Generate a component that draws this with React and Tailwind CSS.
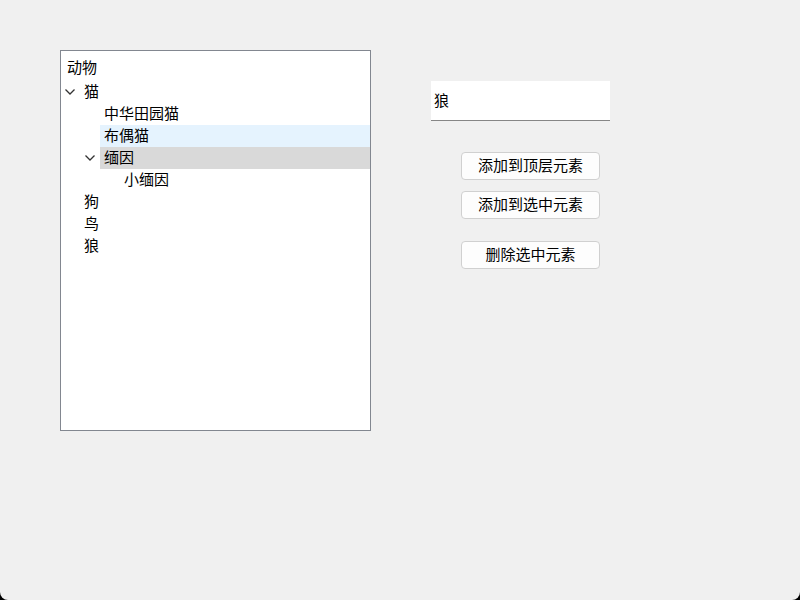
const tree = [
  { label: '猫', level: 0, open: true },
  { label: '中华田园猫', level: 1 },
  { label: '布偶猫', level: 1, hover: true },
  { label: '缅因', level: 1, open: true, selected: true },
  { label: '小缅因', level: 2 },
  { label: '狗', level: 0 },
  { label: '鸟', level: 0 },
  { label: '狼', level: 0 },
]

const indent = ['pl-[3px]', 'pl-[23px]', 'pl-[43px]']

function Chevron() {
  return (
    <svg width="10" height="6" viewBox="0 0 10 6" className="ml-[1px]">
      <path d="M0.5 0.5 L5 5 L9.5 0.5" fill="none" stroke="#333" strokeWidth="1.3" />
    </svg>
  )
}

function TreeRow({ item }) {
  const bg = item.selected ? 'bg-[#d9d9d9]' : item.hover ? 'bg-[#e5f3fe]' : ''
  return (
    <div className={`flex h-[22px] items-center ${indent[item.level]}`}>
      <div className="flex w-[16px] items-center">{item.open && <Chevron />}</div>
      <div className={`flex h-full flex-1 items-center pb-[2px] pl-[4px] ${bg}`}>{item.label}</div>
    </div>
  )
}

export default function App() {
  return (
    <div className="h-[600px] w-[800px] bg-black">
      <div
        className="flex h-full w-full rounded-b-[8px] bg-[#f0f0f0] pl-[60px] pt-[50px] text-[15px] leading-[20px] text-black"
        style={{ fontFamily: '"Noto Sans CJK SC", "Noto Sans", sans-serif' }}
      >
        <div className="h-[381px] w-[311px] border border-[#828790] bg-white">
          <div className="flex h-[30px] items-end pb-[4px] pl-[6px]">动物</div>
          {tree.map((item) => (
            <TreeRow key={item.label} item={item} />
          ))}
        </div>

        <div className="ml-[60px] flex flex-col pt-[31px]">
          <div className="flex h-[40px] w-[179px] items-center border-b border-[#868686] bg-white pb-[2px] pl-[3px]">
            狼
          </div>
          <div className="ml-[30px] mt-[31px] flex flex-col">
            <button className="h-[28px] w-[139px] rounded-[4px] border border-[#d0d0d0] bg-[#fdfdfd] pb-[2px] text-[15px]">
              添加到顶层元素
            </button>
            <button className="mt-[11px] h-[28px] w-[139px] rounded-[4px] border border-[#d0d0d0] bg-[#fdfdfd] pb-[2px] text-[15px]">
              添加到选中元素
            </button>
            <button className="mt-[22px] h-[28px] w-[139px] rounded-[4px] border border-[#d0d0d0] bg-[#fdfdfd] pb-[2px] text-[15px]">
              删除选中元素
            </button>
          </div>
        </div>
      </div>
    </div>
  )
}
